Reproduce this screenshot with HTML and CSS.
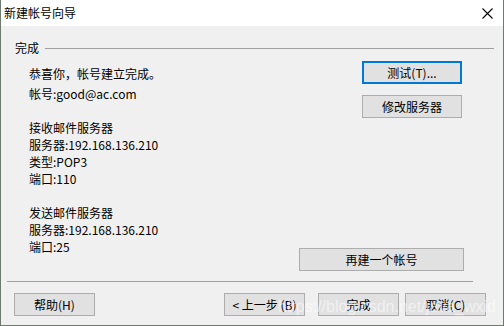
FILE: index.html
```html
<!DOCTYPE html>
<html lang="zh-CN">
<head>
    <meta charset="UTF-8">
    <title>新建帐号向导</title>
    <link rel="stylesheet" href="styles.css">
</head>
<body>
    <div class="window">
        <div class="titlebar">
            <span class="title">新建帐号向导</span>
            <svg class="close" width="11" height="11" viewBox="0 0 11 11">
                <path d="M0.5 0.5 L10.5 10.5 M10.5 0.5 L0.5 10.5" stroke="#000" stroke-width="1.1" fill="none"/>
            </svg>
        </div>

        <div class="content">
            <div class="group-head">
                <span class="group-label">完成</span>
                <span class="group-line"></span>
            </div>

            <div class="group-body">
                <div class="info">
                    <div class="line first">恭喜你，帐号建立完成。</div>
                    <div class="line">帐号:good@ac.com</div>
                    <div class="line">&nbsp;</div>
                    <div class="line">接收邮件服务器</div>
                    <div class="line">服务器:192.168.136.210</div>
                    <div class="line">类型:POP3</div>
                    <div class="line">端口:110</div>
                    <div class="line">&nbsp;</div>
                    <div class="line">发送邮件服务器</div>
                    <div class="line">服务器:192.168.136.210</div>
                    <div class="line">端口:25</div>
                </div>
                <div class="side">
                    <button class="btn small focus">测试(T)...</button>
                    <button class="btn small">修改服务器</button>
                    <button class="btn wide">再建一个帐号</button>
                </div>
            </div>

            <div class="separator"></div>

            <div class="footer">
                <button class="btn">帮助(H)</button>
                <div class="footer-right">
                    <button class="btn">&lt; 上一步 (B)</button>
                    <button class="btn">完成</button>
                    <button class="btn">取消(C)</button>
                </div>
            </div>
        </div>

        <div class="watermark">https://blog.csdn.net/java_wxid</div>
    </div>
</body>
</html>
```

FILE: styles.css
```css
body {
    margin: 0;
    font-family: "Noto Sans CJK SC", "Noto Sans", sans-serif;
    font-size: 12px;
    color: #000;
}

.window {
    position: relative;
    width: 504px;
    height: 326px;
    box-sizing: border-box;
    border: 1px solid #6e7a6e;
    border-top: none;
    background-color: #f0f0f0;
    overflow: hidden;
}

.titlebar {
    height: 26px;
    background-color: #fff;
    display: flex;
    justify-content: space-between;
    align-items: center;
    padding: 0 10px 0 3px;
}

.title {
    font-size: 12px;
    line-height: 14px;
}

.close {
    display: block;
    margin-top: 1px;
}

.content {
    padding: 0 0 0 6px;
}

.group-head {
    display: flex;
    align-items: center;
    height: 14px;
    margin-top: 15px;
    padding-left: 8px;
    padding-right: 9px;
}

.group-label {
    line-height: 14px;
    padding-right: 6px;
}

.group-line {
    flex: 1;
    border-top: 1px solid #a0a0a0;
    margin-top: 1px;
}

.group-body {
    display: flex;
    justify-content: space-between;
    height: 226px;
    padding-left: 22px;
    padding-right: 39px;
}

.info {
    padding-top: 10px;
}

.line {
    line-height: 17px;
    white-space: nowrap;
}

.line.first {
    margin-bottom: 3px;
}

.side {
    display: flex;
    flex-direction: column;
    align-items: flex-end;
    padding-top: 6px;
}

.btn {
    font-family: "Noto Sans CJK SC", "Noto Sans", sans-serif;
    font-size: 12px;
    color: #000;
    background-color: #e1e1e1;
    border: 1px solid #adadad;
    height: 23px;
    width: 81px;
    padding: 0;
    box-sizing: border-box;
}

.btn.small {
    width: 100px;
    margin-right: 2px;
}

.btn.small + .btn.small {
    margin-top: 11px;
}

.btn.focus {
    border: 2px solid #0078d7;
}

.btn.wide {
    width: 165px;
    margin-top: auto;
    margin-bottom: 10px;
}

.separator {
    border-top: 1px solid #a0a0a0;
    width: 466px;
}

.footer {
    display: flex;
    justify-content: space-between;
    margin-top: 11px;
    padding-left: 7px;
    padding-right: 17px;
}

.footer-right {
    display: flex;
    gap: 13px;
}

.footer-right .btn:last-child {
    margin-left: -7px;
}

.watermark {
    position: absolute;
    left: 277px;
    top: 298px;
    font-family: "Liberation Sans", Arial, sans-serif;
    font-size: 16px;
    color: rgba(255, 255, 255, 0.55);
    pointer-events: none;
}
```
